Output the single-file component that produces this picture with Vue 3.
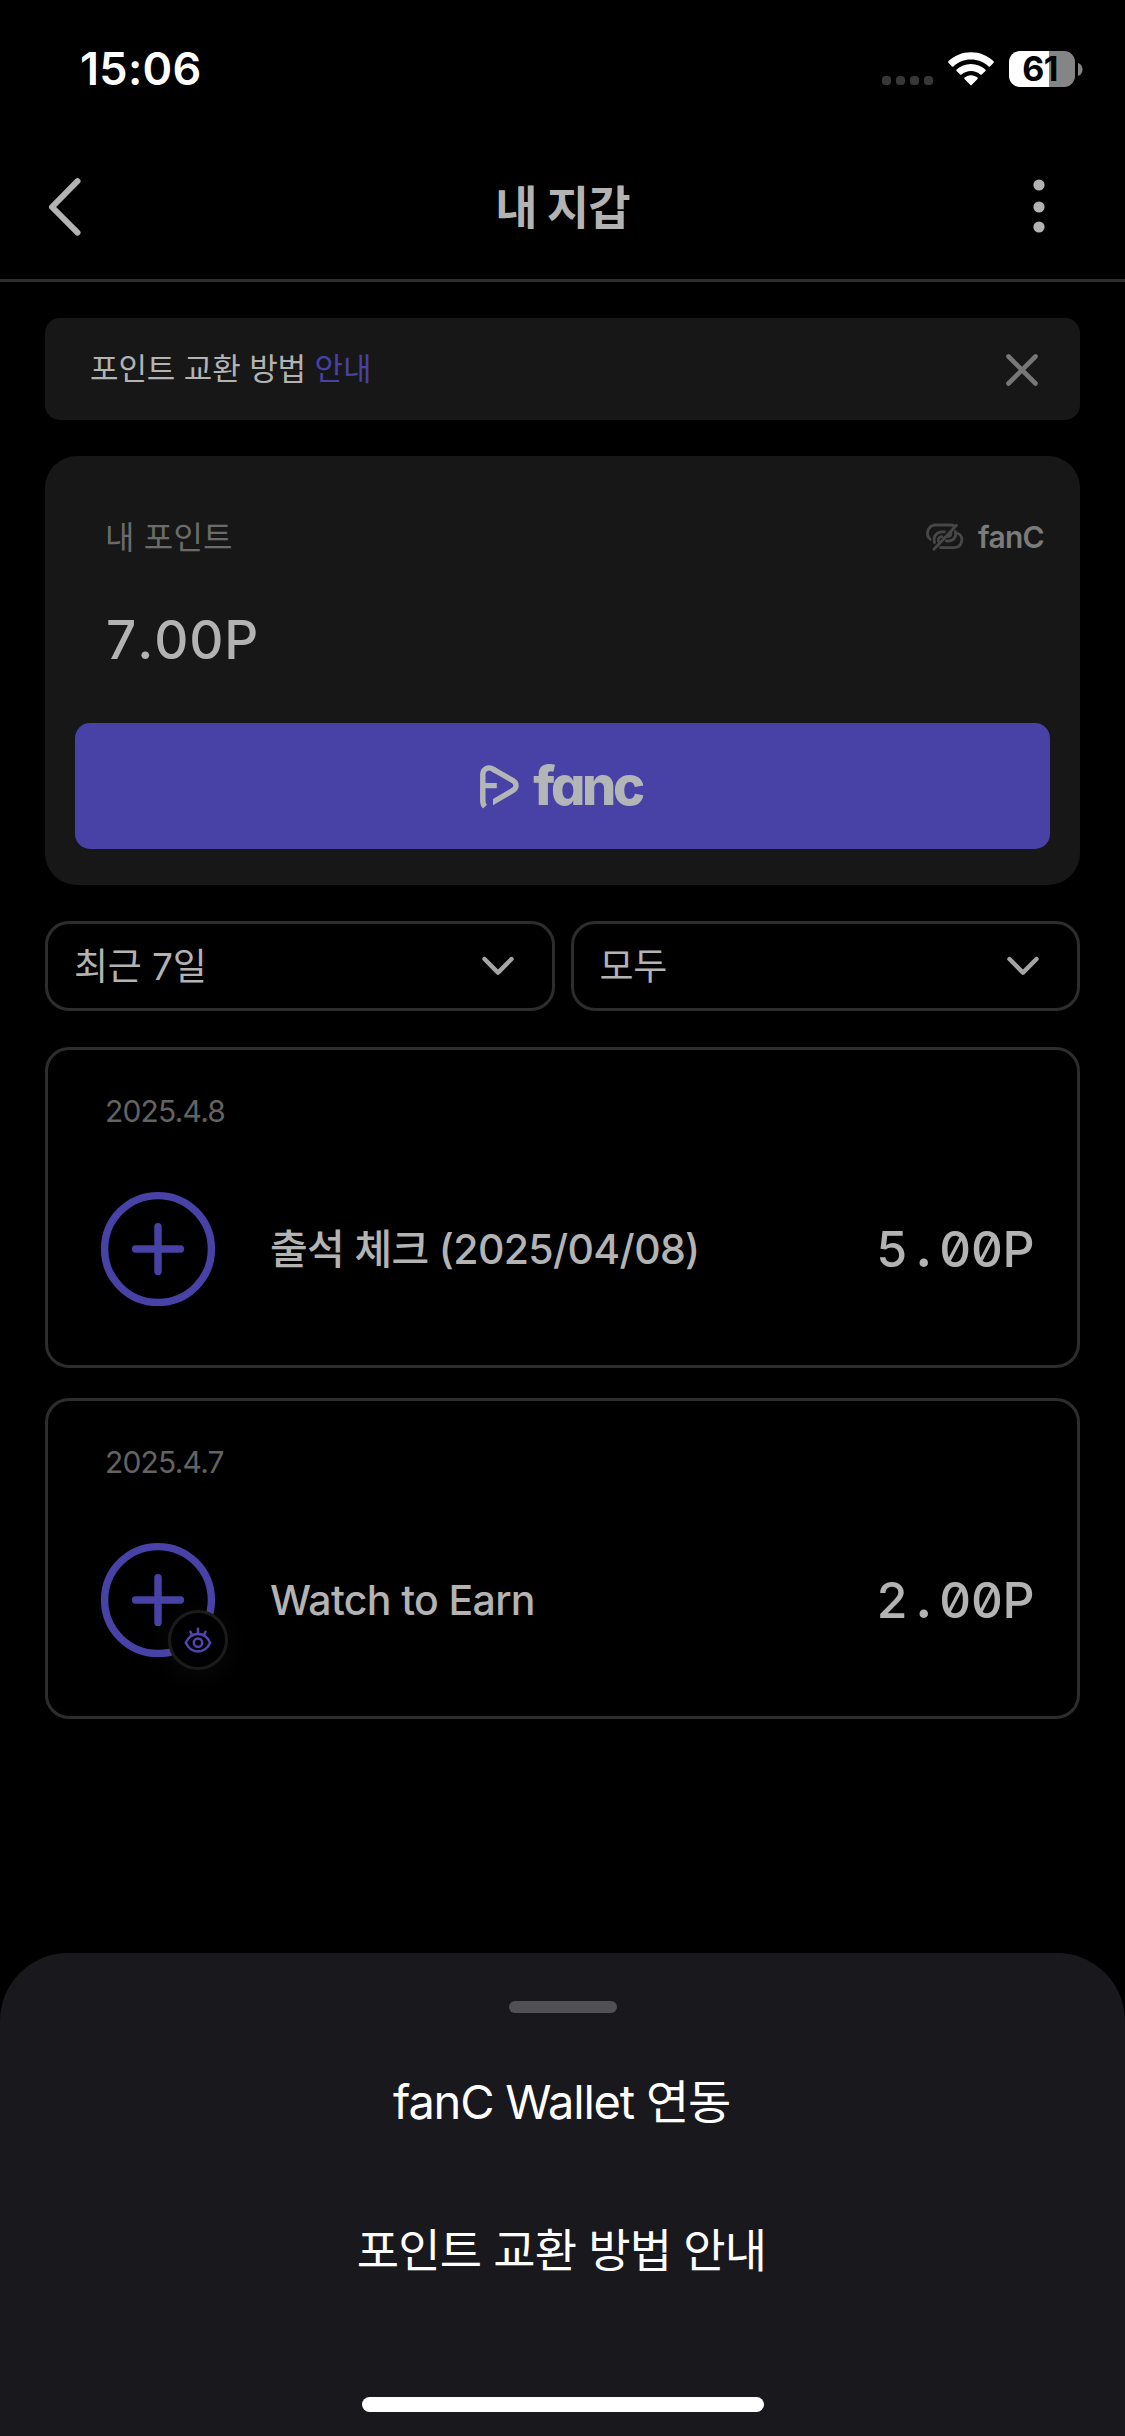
<script setup>
const filters = ['최근 7일', '모두']

const entries = [
  { date: '2025.4.8', title: '출석 체크 (2025/04/08)', whole: '5', rest: '00P', badge: false },
  { date: '2025.4.7', title: 'Watch to Earn', whole: '2', rest: '00P', badge: true },
]

const actions = [
  { label: 'fanC Wallet 연동', kind: 'mixed' },
  { label: '포인트 교환 방법 안내', kind: 'hangul' },
]
</script>

<template>
  <div class="screen">
    <header class="status">
      <span class="clock">15:06</span>
      <div class="indicators">
        <div class="signal"><i></i><i></i><i></i><i></i></div>
        <svg class="wifi" viewBox="0 0 46 34" fill="#fff">
          <path d="M23 0.3C31.8 0.3 39.8 3.7 45.6 9.3Q46.3 10 45.6 10.7L42 14.4Q41.3 15 40.6 14.4C35.9 10.1 29.7 7.5 23 7.5S10.1 10.1 5.4 14.4Q4.7 15 4 14.4L0.4 10.7Q-0.3 10 0.4 9.3C6.2 3.7 14.2 0.3 23 0.3Z" />
          <path d="M23 11.9C28.6 11.9 33.6 14 37.4 17.5Q38.1 18.2 37.4 18.9L33.8 22.5Q33.1 23.1 32.4 22.5C29.9 20.4 26.6 19 23 19S16.1 20.4 13.6 22.5Q12.9 23.1 12.2 22.5L8.6 18.9Q7.9 18.2 8.6 17.5C12.4 14 17.4 11.9 23 11.9Z" />
          <path d="M23 23.2C25.6 23.2 27.8 24.1 29.5 25.6Q30.1 26.2 29.5 26.9L23.6 33Q23 33.6 22.4 33L16.5 26.9Q15.9 26.2 16.5 25.6C18.2 24.1 20.4 23.2 23 23.2Z" />
        </svg>
        <div class="battery"><span>61</span></div>
        <svg class="tip" viewBox="0 0 5 13"><path d="M0 0C6 2 6 11 0 13Z" fill="#858585" /></svg>
      </div>
    </header>

    <nav class="navbar">
      <svg class="back" viewBox="0 0 34 58"><path d="M29.5 3.2L4 29L29.5 54.6" /></svg>
      <h1>내 지갑</h1>
      <svg class="more" viewBox="0 0 12 54" fill="#b3b3b3">
        <circle cx="6" cy="6" r="5.6" /><circle cx="6" cy="28" r="5.6" /><circle cx="6" cy="48" r="5.6" />
      </svg>
    </nav>

    <main class="content">
      <section class="notice">
        <p>포인트 교환 방법 <a>안내</a></p>
        <svg viewBox="0 0 34 34"><path d="M3.5 3.5L30.5 30.5M30.5 3.5L3.5 30.5" /></svg>
      </section>

      <section class="wallet">
        <div class="wallet-head">
          <span class="wallet-label">내 포인트</span>
          <div class="link-state">
            <svg viewBox="0 0 39 28">
              <path d="M5.2 16.2A8.2 8.2 0 0 1 9.8 2H25C27 2 28.5 2.4 29.7 3.2" />
              <path d="M9.5 19.6C7.6 14 11.5 8.8 17 8.8H19.5" />
              <path d="M13.3 18.2C12.9 15.5 14.5 13.6 17 13.6" />
              <path d="M33 10.4C39 13.2 38 24 29.5 24.6H15.5" />
              <path d="M30.3 8.4C32 14.2 28 18 23.5 18H21.3" />
              <path d="M26 9.7C26 12 24.8 13.4 22.6 13.6" />
              <path d="M31.5 2.2L9 26.2" />
            </svg>
            <span>fanC</span>
          </div>
        </div>
        <div class="balance">7.00P</div>
        <button class="fanc">
          <svg viewBox="0 0 40 43">
            <defs>
              <clipPath id="mark-tail"><rect x="13" y="-2" width="30" height="46" /></clipPath>
            </defs>
            <path d="M5 41.6Q2.8 39.4 2.8 36V9.6C2.8 4.2 7.8 1.4 12.4 3.8L16 5.9M2.8 20.6H16.8" />
            <path clip-path="url(#mark-tail)" d="M12.4 3.8L33 15.7C37 18 37 23 33 25.4L8 40" />
          </svg>
          <span>fanc</span>
        </button>
      </section>

      <div class="filters">
        <div v-for="f in filters" :key="f" class="select">
          <span>{{ f }}</span>
          <svg viewBox="0 0 34 20"><path d="M3.5 3L17 16.6L30.5 3" /></svg>
        </div>
      </div>

      <article v-for="e in entries" :key="e.date" class="entry">
        <time>{{ e.date }}</time>
        <div class="row">
          <div class="plus">
            <svg viewBox="0 0 114 114">
              <circle cx="57" cy="57" r="53.4" /><path d="M57 34.6V79.4M34.6 57H79.4" />
            </svg>
            <div v-if="e.badge" class="badge">
              <svg viewBox="0 0 28 27">
                <path d="M1.8 15.7C7.2 4.1 20.8 4.1 26.2 15.7C20.8 27.3 7.2 27.3 1.8 15.7Z" />
                <circle cx="14" cy="15.7" r="4.2" />
                <path d="M14 6.2V1.7M7.9 7.8L6.5 4.7M20.1 7.8L21.5 4.7" />
              </svg>
            </div>
          </div>
          <span class="title">{{ e.title }}</span>
          <span class="amount">{{ e.whole }}<span class="point">.</span>{{ e.rest }}</span>
        </div>
      </article>
    </main>

    <aside class="sheet">
      <div class="handle"></div>
      <div v-for="a in actions" :key="a.label" class="action" :class="a.kind">{{ a.label }}</div>
      <div class="home"></div>
    </aside>
  </div>
</template>

<style>
body {
  background: #000;
}
</style>

<style scoped>
.screen {
  box-sizing: border-box;
  width: 1125px;
  height: 2436px;
  display: flex;
  flex-direction: column;
  overflow: hidden;
  background: #000;
  color: #b3b3b3;
  font-family: Inter, "Noto Sans CJK KR", sans-serif;
  white-space: nowrap;
}
svg {
  display: block;
  flex: none;
  overflow: visible;
}
.status {
  height: 132px;
  flex: none;
  display: flex;
  justify-content: space-between;
  box-sizing: border-box;
  padding: 39px 42px 0 80px;
  color: #fff;
}
.clock {
  font-size: 45px;
  font-weight: 600;
  line-height: 60px;
  letter-spacing: 0.3px;
}
.indicators {
  display: flex;
  height: 60px;
  align-items: center;
}
.signal {
  display: flex;
  gap: 5px;
  margin: 23px 15px 0 0;
}
.signal i {
  width: 9px;
  height: 9px;
  border-radius: 3.5px;
  background: #373737;
}
.wifi {
  width: 46px;
  height: 34px;
  margin-right: 15px;
}
.battery {
  box-sizing: border-box;
  width: 66px;
  height: 36px;
  padding-right: 4px;
  border-radius: 11px;
  background: linear-gradient(90deg, #fff 40px, #858585 40px);
  color: #000;
  font-size: 34px;
  font-weight: 700;
  line-height: 36px;
  text-align: center;
  letter-spacing: -0.5px;
}
.tip {
  width: 5px;
  height: 13px;
  margin-left: 3px;
}
.navbar {
  height: 150px;
  flex: none;
  box-sizing: border-box;
  display: flex;
  align-items: center;
  justify-content: space-between;
  padding: 0 80px 0 48px;
  border-bottom: 3px solid #2d2d2d;
}
.back {
  width: 34px;
  height: 58px;
  margin-top: 3px;
}
.back path {
  fill: none;
  stroke: #b3b3b3;
  stroke-width: 6;
  stroke-linecap: round;
  stroke-linejoin: round;
}
h1 {
  margin: 3px 0 0 10px;
  font-size: 46px;
  line-height: 60px;
  font-weight: 700;
  letter-spacing: -0.9px;
}
.more {
  width: 12px;
  height: 54px;
  margin-top: 1px;
}
.content {
  flex: 1;
  padding: 36px 45px 0;
}
.notice {
  height: 102px;
  border-radius: 15px;
  background: #171717;
  display: flex;
  align-items: center;
  justify-content: space-between;
  padding: 0 41px 0 45px;
}
.notice p {
  margin: 0;
  font-size: 31px;
  line-height: 46px;
  letter-spacing: -0.12px;
}
.notice a {
  color: #4841a6;
}
.notice svg {
  width: 34px;
  height: 34px;
  margin-top: 2px;
}
.notice path {
  fill: none;
  stroke: #777;
  stroke-width: 4.6;
  stroke-linecap: round;
}
.wallet {
  height: 429px;
  margin-top: 36px;
  box-sizing: border-box;
  padding: 57px 30px 0;
  border-radius: 32px;
  background: #171717;
}
.wallet-head {
  height: 48px;
  display: flex;
  align-items: center;
  justify-content: space-between;
  padding: 0 6px 0 30px;
}
.wallet-label {
  margin-top: 2px;
  font-size: 32px;
  line-height: 48px;
  letter-spacing: 0.2px;
  color: #6b6b6b;
}
.link-state {
  display: flex;
  align-items: center;
  gap: 14px;
  font-size: 30px;
  font-weight: 600;
  color: #7b7b7b;
  letter-spacing: -0.7px;
}
.link-state svg {
  width: 39px;
  height: 28px;
}
.link-state path {
  fill: none;
  stroke: #474747;
  stroke-width: 2.8;
  stroke-linecap: round;
}
.balance {
  height: 74px;
  margin-top: 42px;
  padding-left: 31px;
  font-size: 53px;
  font-weight: 500;
  line-height: 74px;
  letter-spacing: 0.9px;
  font-kerning: none;
}
.fanc {
  width: 975px;
  height: 126px;
  margin-top: 46px;
  padding: 0 3px 0 0;
  border: 0;
  border-radius: 15px;
  background: #4841a6;
  display: flex;
  align-items: center;
  justify-content: center;
  gap: 13px;
  color: #b3b6b6;
  font-family: inherit;
}
.fanc svg {
  width: 40px;
  height: 43px;
}
.fanc path {
  fill: none;
  stroke: #b3b6b6;
  stroke-width: 5.4;
}
.fanc span {
  font-size: 54px;
  font-weight: 800;
  line-height: 60px;
  letter-spacing: -3.4px;
  font-feature-settings: "cv11";
}
.filters {
  display: grid;
  grid-template-columns: 1fr 1fr;
  gap: 16px;
  margin-top: 36px;
}
.select {
  height: 90px;
  box-sizing: border-box;
  border: 3px solid #2d2d2d;
  border-radius: 24px;
  display: flex;
  align-items: center;
  justify-content: space-between;
  padding: 0 37px 0 26px;
  font-size: 37px;
  line-height: 60px;
  letter-spacing: -0.2px;
}
.select span {
  margin-top: 2px;
}
.select svg {
  width: 34px;
  height: 20px;
}
.select path {
  fill: none;
  stroke: #a5a5a5;
  stroke-width: 4.4;
  stroke-linecap: round;
  stroke-linejoin: round;
}
.entry {
  height: 321px;
  box-sizing: border-box;
  margin-top: 30px;
  padding: 41px 43px 0 53px;
  border: 3px solid #2d2d2d;
  border-radius: 24px;
}
.filters + .entry {
  margin-top: 36px;
}
time {
  display: block;
  padding-left: 4px;
  font-size: 30px;
  line-height: 40px;
  letter-spacing: -0.8px;
  color: #636363;
}
.row {
  display: flex;
  align-items: center;
  height: 114px;
  margin-top: 61px;
}
.plus {
  position: relative;
  width: 114px;
  height: 114px;
  margin-right: 55px;
}
.plus > svg {
  width: 114px;
  height: 114px;
  fill: none;
  stroke: #4841a6;
  stroke-width: 7.4;
  stroke-linecap: round;
}
.badge {
  position: absolute;
  left: 67px;
  top: 67px;
  width: 60px;
  height: 60px;
  box-sizing: border-box;
  border: 3px solid #1b1b1b;
  border-radius: 50%;
  background: #000;
  box-shadow: 0 4px 24px 4px rgba(255, 255, 255, 0.03);
  display: flex;
  align-items: center;
  justify-content: center;
}
.badge svg {
  width: 28px;
  height: 27px;
  fill: none;
  stroke: #5145b2;
  stroke-width: 2.5;
  stroke-linecap: round;
}
.title {
  flex: 1;
  font-size: 41px;
  line-height: 60px;
  font-weight: 500;
  letter-spacing: -0.65px;
}
.amount {
  font-size: 50px;
  line-height: 60px;
  font-weight: 500;
  letter-spacing: -0.6px;
  font-feature-settings: "zero", "tnum";
}
.point {
  display: inline-block;
  width: 31px;
  text-align: center;
  font-weight: 700;
}
.sheet {
  height: 483px;
  flex: none;
  box-sizing: border-box;
  padding-top: 48px;
  border-radius: 68px 68px 0 0;
  background: #19181d;
  color: #fff;
  display: flex;
  flex-direction: column;
  align-items: center;
}
.handle {
  width: 108px;
  height: 12px;
  border-radius: 6px;
  background: #515154;
}
.action {
  height: 72px;
  margin-top: 53px;
  padding-right: 2px;
  font-size: 47px;
  line-height: 72px;
  letter-spacing: -1.2px;
}
.action + .action {
  margin-top: 76px;
}
.action.hangul {
  font-size: 46px;
  letter-spacing: -0.85px;
}
.home {
  width: 402px;
  height: 15px;
  margin-top: 111px;
  border-radius: 8px;
  background: #fff;
}
</style>
